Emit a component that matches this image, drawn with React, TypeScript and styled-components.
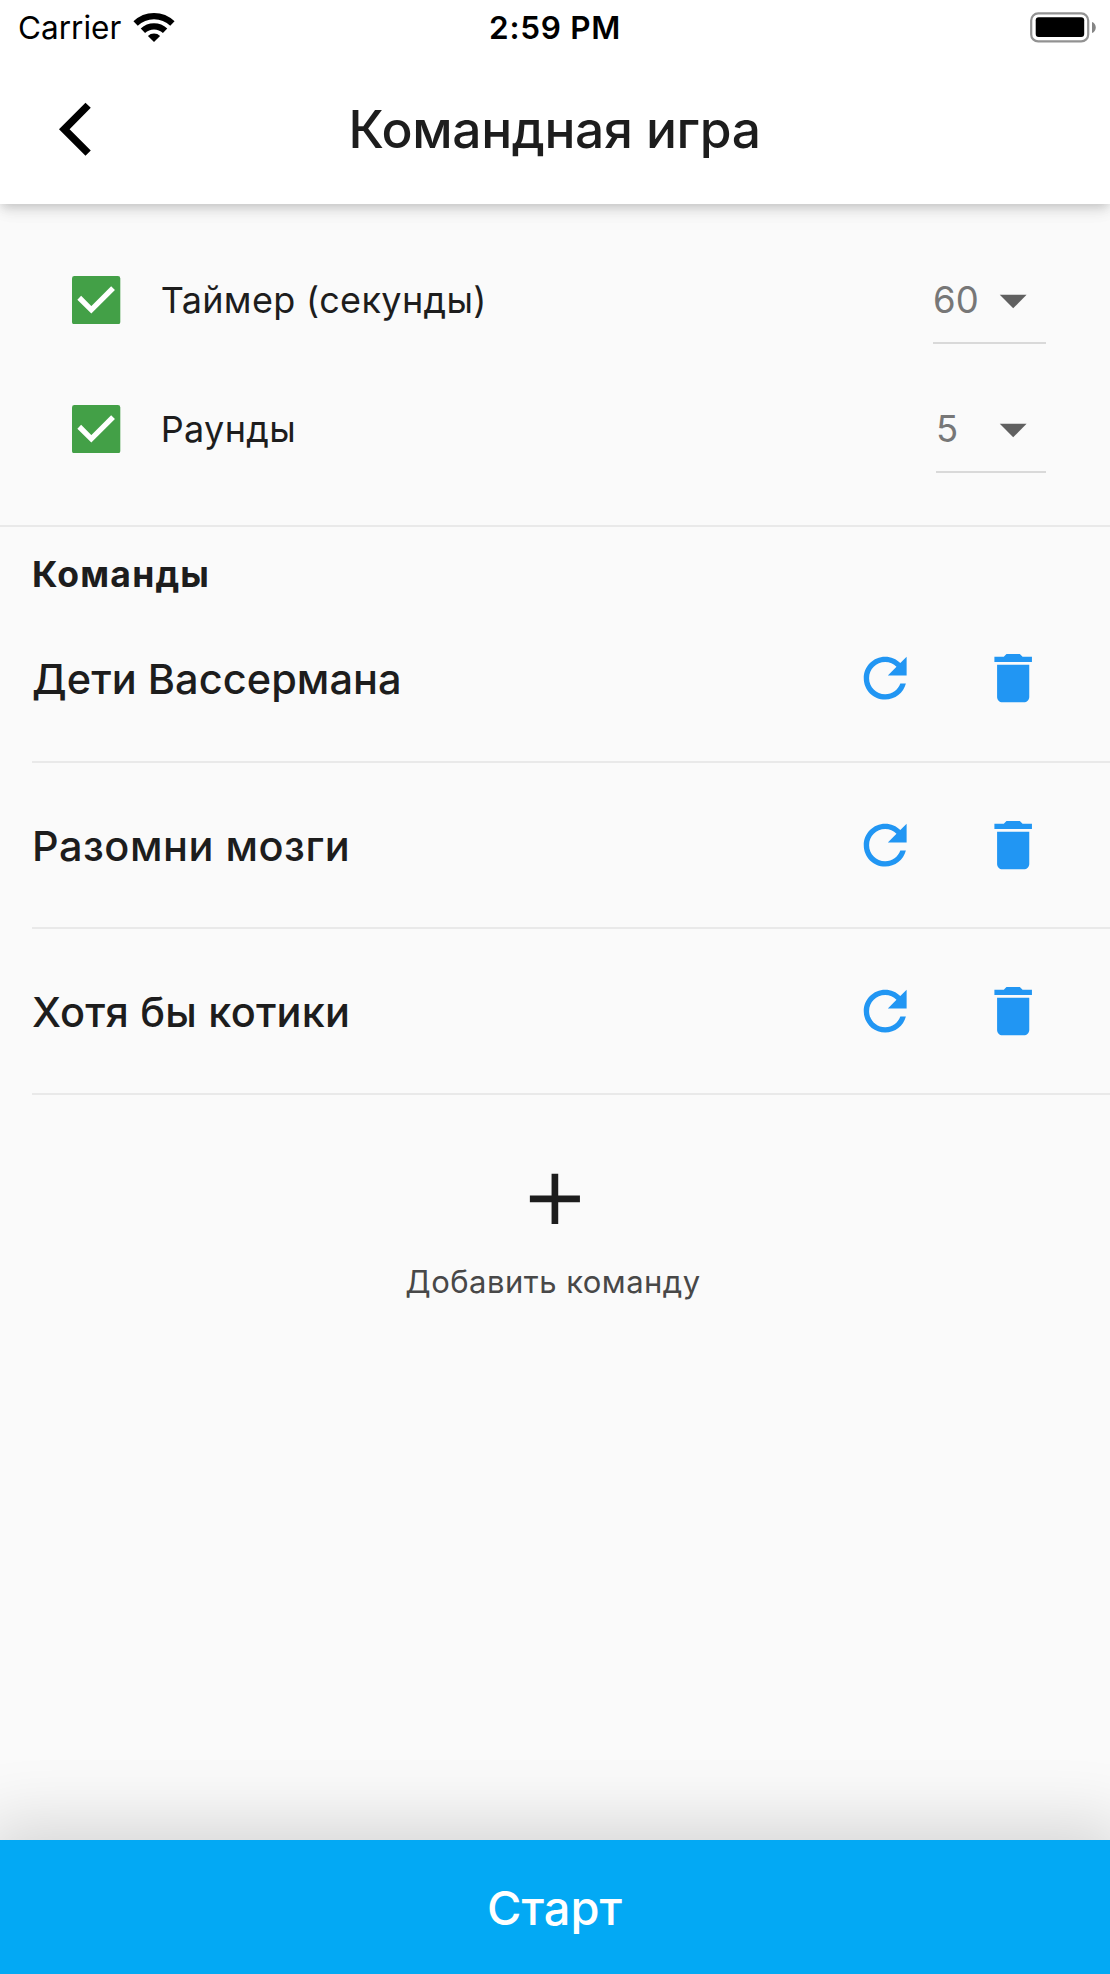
import React from "react";
import styled, { createGlobalStyle } from "styled-components";

const GlobalStyle = createGlobalStyle`
  *, *::before, *::after { box-sizing: border-box; }
  body { margin: 0; background: #fafafa; }
  button { border: 0; padding: 0; background: none; font: inherit; color: inherit; }
`;

const Screen = styled.div`
  width: 1110px;
  height: 1974px;
  display: flex;
  flex-direction: column;
  overflow: hidden;
  background: #fafafa;
  color: #1d1d1d;
  font-family: Inter, "Noto Sans", sans-serif;
  white-space: nowrap;
`;

const Header = styled.header`
  flex: none;
  height: 204px;
  background: #fff;
  box-shadow: 0 4px 9px -2px rgba(0, 0, 0, 0.13), 0 9px 13px rgba(0, 0, 0, 0.05),
    0 3px 18px rgba(0, 0, 0, 0.08);
`;

const StatusBar = styled.div`
  height: 54px;
  display: grid;
  grid-template-columns: 1fr auto 1fr;
  align-items: center;
  padding: 0 14px;
  color: #000;
`;

const CarrierGroup = styled.div`
  display: flex;
  align-items: center;
  gap: 12px;
  padding-left: 4px;
`;

const Carrier = styled.span`
  padding-top: 1px;
  font-size: 31.5px;
  font-weight: 400;
  letter-spacing: 0;
  line-height: 54px;
`;

const Clock = styled.span`
  padding-top: 1px;
  font-size: 31.5px;
  font-weight: 600;
  letter-spacing: 0.7px;
  line-height: 54px;
`;

const BatteryIcon = styled.svg`
  justify-self: end;
`;

const AppBar = styled.div`
  height: 150px;
  display: grid;
  grid-template-columns: 150px 1fr 150px;
  align-items: center;
`;

const BackButton = styled.button`
  height: 150px;
  padding-left: 59px;
  display: flex;
  align-items: center;
  color: #000;
`;

const Title = styled.h1`
  margin: 0;
  padding-right: 1px;
  text-align: center;
  font-size: 51.5px;
  font-weight: 500;
  letter-spacing: -0.35px;
  line-height: 64px;
`;

const Settings = styled.section`
  flex: none;
  height: 323px;
  padding: 32px 64.5px 0 32px;
  border-bottom: 2px solid #e9e9e9;
`;

const SettingRow = styled.div`
  height: 128.7px;
  display: flex;
  align-items: center;
`;

const CheckBox = styled.svg`
  margin-left: 40.4px;
  margin-right: 40px;
  flex: none;
`;

const SettingLabel = styled.span`
  flex: 1;
  font-size: 36px;
  font-weight: 400;
  letter-spacing: 0.35px;
  line-height: 44px;
`;

const Select = styled.button<{ $width: number }>`
  width: ${(p) => p.$width}px;
  height: 88px;
  padding-top: 2px;
  display: flex;
  align-items: center;
  justify-content: space-between;
  border-bottom: 2px solid #d9d9d9;
  color: #777;
  font-size: 36.5px;
  font-weight: 400;
  line-height: 44px;

  svg {
    color: #606060;
  }
`;

const Teams = styled.section`
  flex: none;
  padding-left: 32px;
`;

const SectionTitle = styled.h2`
  margin: 0;
  height: 69.3px;
  padding-top: 26px;
  font-size: 35.5px;
  font-weight: 700;
  letter-spacing: 1.2px;
  line-height: 44px;
`;

const TeamRow = styled.div`
  height: 166.3px;
  display: flex;
  align-items: center;
  padding-right: 32px;
  border-bottom: 2px solid #e9e9e9;
`;

const TeamName = styled.span<{ $tracking: number }>`
  flex: 1;
  padding-top: 2px;
  font-size: 41.5px;
  font-weight: 500;
  letter-spacing: ${(p) => p.$tracking}px;
  line-height: 52px;
`;

const IconButton = styled.button`
  width: 128.7px;
  height: 128.7px;
  display: flex;
  align-items: center;
  justify-content: center;
  color: #2196f3;
`;

const AddTeam = styled.button`
  flex: none;
  align-self: center;
  margin-top: 61px;
  display: flex;
  flex-direction: column;
  align-items: center;
`;

const AddLabel = styled.span`
  margin-top: 20px;
  padding-right: 4px;
  color: #484848;
  font-size: 31px;
  font-weight: 400;
  letter-spacing: 0.48px;
  line-height: 40px;
`;

const StartButton = styled.button`
  flex: none;
  height: 134px;
  margin-top: auto;
  padding: 1px 1px 0 0;
  background: #03a9f4;
  box-shadow: 0 0 68px 16px rgba(0, 0, 0, 0.15);
  color: #fff;
  font-size: 47px;
  font-weight: 500;
  letter-spacing: 0;
  line-height: 60px;
`;

const MaterialIcon = ({ d, size = 64.35 }: { d: string; size?: number }) => (
  <svg width={size} height={size} viewBox="0 0 24 24" fill="currentColor" aria-hidden="true">
    <path d={d} />
  </svg>
);

const REFRESH =
  "M17.65 6.35C16.2 4.9 14.21 4 12 4c-4.42 0-7.99 3.58-7.99 8s3.57 8 7.99 8c3.73 0 6.84-2.55 7.73-6h-2.08c-.82 2.33-3.04 4-5.65 4-3.31 0-6-2.69-6-6s2.69-6 6-6c1.66 0 3.14.69 4.22 1.78L13 11h7V4l-2.35 2.35z";
const TRASH = "M6 19c0 1.1.9 2 2 2h8c1.1 0 2-.9 2-2V7H6v12zM19 4h-3.5l-1-1h-5l-1 1H5v2h14V4z";
const BACK = "M9.88 2.1L0 12L9.88 21.9L11.85 19.95L3.95 12L11.85 4.05Z";
const DROP_DOWN = "M7 10l5 5 5-5z";
const PLUS = "M19 12.93h-6.07V19h-1.86v-6.07H5v-1.86h6.07V5h1.86v6.07H19z";

const WifiIcon = () => (
  <svg width="42" height="32" viewBox="0 0 42 32" aria-hidden="true">
    <g fill="none" stroke="#000" strokeWidth="6.2">
      <path d="M2.6 11.5A26.4 26.4 0 0 1 39.4 11.5" />
      <path d="M9.9 18.8A16 16 0 0 1 32.1 18.8" />
    </g>
    <path d="M21 30L14.9 23.9A8.7 8.7 0 0 1 27.1 23.9Z" fill="#000" />
  </svg>
);

const settings = [
  { label: "Таймер (секунды)", value: "60", width: 112.5 },
  { label: "Раунды", value: "5", width: 109.5 },
];

const teams = [
  { name: "Дети Вассермана", tracking: 0.05 },
  { name: "Разомни мозги", tracking: 0.5 },
  { name: "Хотя бы котики", tracking: 0.2 },
];

export default function App() {
  return (
    <Screen>
      <GlobalStyle />
      <Header>
        <StatusBar>
          <CarrierGroup>
            <Carrier>Carrier</Carrier>
            <WifiIcon />
          </CarrierGroup>
          <Clock>2:59 PM</Clock>
          <BatteryIcon width="66" height="32" viewBox="0 0 66 32">
            <rect x="1.2" y="1.4" width="57" height="28" rx="7" fill="none" stroke="#929292" strokeWidth="2.2" />
            <rect x="5.7" y="5.3" width="48.5" height="19.8" rx="3" fill="#000" />
            <path d="M62 10C67 11.5 67 19.5 62 21Z" fill="#858585" />
          </BatteryIcon>
        </StatusBar>
        <AppBar>
          <BackButton aria-label="Назад">
            <MaterialIcon d={BACK} />
          </BackButton>
          <Title>Командная игра</Title>
        </AppBar>
      </Header>

      <Settings>
        {settings.map((s) => (
          <SettingRow key={s.label}>
            <CheckBox width="48.3" height="48.3" viewBox="0 0 18 18">
              <rect width="18" height="18" rx="0.9" fill="#43a047" />
              <path d="M2.7 8.1L7.2 12.6L15.3 4.5" fill="none" stroke="#fff" strokeWidth="2" />
            </CheckBox>
            <SettingLabel>{s.label}</SettingLabel>
            <Select $width={s.width}>
              {s.value}
              <MaterialIcon d={DROP_DOWN} />
            </Select>
          </SettingRow>
        ))}
      </Settings>

      <Teams>
        <SectionTitle>Команды</SectionTitle>
        {teams.map((team) => (
          <TeamRow key={team.name}>
            <TeamName $tracking={team.tracking}>{team.name}</TeamName>
            <IconButton aria-label="Обновить">
              <MaterialIcon d={REFRESH} />
            </IconButton>
            <IconButton aria-label="Удалить">
              <MaterialIcon d={TRASH} />
            </IconButton>
          </TeamRow>
        ))}
      </Teams>

      <AddTeam>
        <MaterialIcon d={PLUS} size={85.8} />
        <AddLabel>Добавить команду</AddLabel>
      </AddTeam>

      <StartButton>Старт</StartButton>
    </Screen>
  );
}
